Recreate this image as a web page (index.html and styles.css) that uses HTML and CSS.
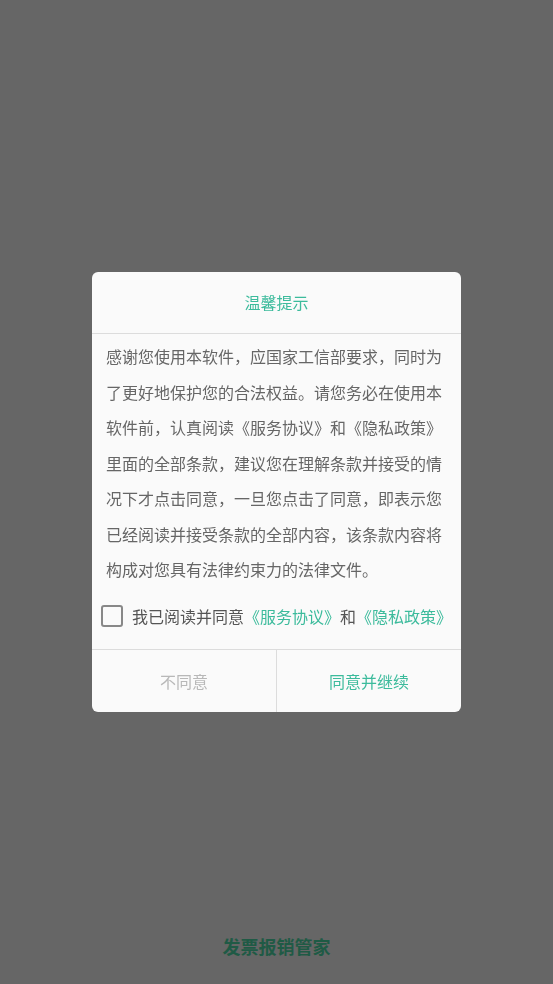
FILE: index.html
```html
<!DOCTYPE html>
<html lang="zh">
<head>
<meta charset="utf-8">
<link rel="stylesheet" href="styles.css">
</head>
<body>
<div class="page">
  <div class="app-name">发票报销管家</div>
</div>
<div class="overlay">
  <div class="dialog">
    <div class="dialog-title">温馨提示</div>
    <div class="dialog-body">感谢您使用本软件，应国家工信部要求，同时为了更好地保护您的合法权益。请您务必在使用本软件前，认真阅读《服务协议》和《隐私政策》里面的全部条款，建议您在理解条款并接受的情况下才点击同意，一旦您点击了同意，即表示您已经阅读并接受条款的全部内容，该条款内容将构成对您具有法律约束力的法律文件。</div>
    <div class="agree-row">
      <span class="checkbox"></span>
      <span class="agree-text">我已阅读并同意<span class="link">《服务协议》</span>和<span class="link">《隐私政策》</span></span>
    </div>
    <div class="actions">
      <div class="btn btn-cancel">不同意</div>
      <div class="btn btn-ok">同意并继续</div>
    </div>
  </div>
</div>
</body>
</html>
```
FILE: styles.css
```css
html, body {
  margin: 0;
  padding: 0;
  height: 100%;
}
body {
  background: #666666;
  font-family: "Noto Sans CJK SC", "Noto Sans", sans-serif;
}
.page {
  height: 100%;
  display: flex;
  flex-direction: column;
  justify-content: flex-end;
  align-items: center;
}
.app-name {
  font-size: 18px;
  font-weight: 700;
  color: #1f5a45;
  padding-bottom: 26px;
  line-height: 24px;
}
.overlay {
  position: fixed;
  inset: 0;
  display: flex;
  align-items: center;
  justify-content: center;
}
.dialog {
  width: 369px;
  background: #fafafa;
  border-radius: 6px;
  overflow: hidden;
}
.dialog-title {
  height: 61px;
  line-height: 61px;
  text-align: center;
  font-size: 16px;
  color: #3cbb9c;
  border-bottom: 1px solid #dcdcdc;
}
.dialog-body {
  padding: 5px 13px 0 14px;
  font-size: 16px;
  line-height: 35.5px;
  color: #666666;
}
.agree-row {
  display: flex;
  align-items: center;
  padding: 17px 0 22px 9px;
}
.checkbox {
  width: 18px;
  height: 18px;
  border: 2px solid #888;
  border-radius: 3px;
  box-sizing: content-box;
  flex: none;
}
.agree-text {
  margin-left: 9px;
  font-size: 16px;
  line-height: 22px;
  color: #555555;
}
.link {
  color: #3cbb9c;
}
.actions {
  display: flex;
  border-top: 1px solid #dcdcdc;
  height: 62px;
}
.btn {
  flex: 1;
  display: flex;
  align-items: center;
  justify-content: center;
  font-size: 16px;
}
.btn-cancel {
  color: #b8b8b8;
  border-right: 1px solid #dcdcdc;
}
.btn-ok {
  color: #3cbb9c;
}
```
